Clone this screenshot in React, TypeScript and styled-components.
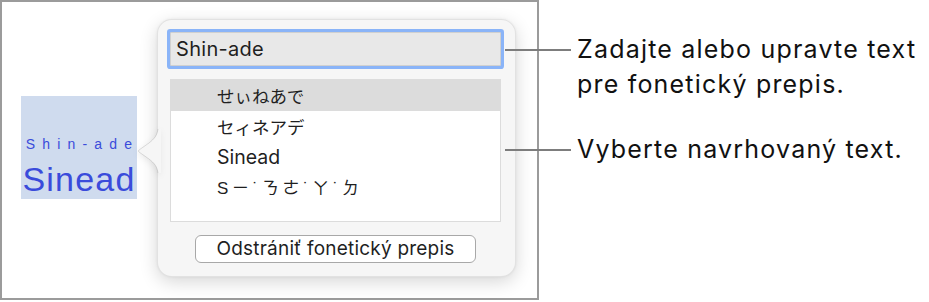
import * as React from 'react';
import styled, { createGlobalStyle } from 'styled-components';

const GlobalStyle = createGlobalStyle`
    html, body {
        margin: 0;
        padding: 0;
        background: #ffffff;
    }
    body {
        font-family: Inter, "Liberation Sans", Arial, "Noto Sans CJK JP", sans-serif;
        color: #1d1d1d;
    }
`;

type Script = 'kana' | 'latin' | 'zhuyin';

const suggestions: { text: string; script: Script }[] = [
    { text: 'せぃねあで', script: 'kana' },
    { text: 'セィネアデ', script: 'kana' },
    { text: 'Sinead', script: 'latin' },
    { text: 'Sㄧ˙ㄋㄜ˙ㄚ˙ㄉ', script: 'zhuyin' },
];

const callouts = [
    { id: 'edit', text: 'Zadajte alebo upravte text pre fonetický prepis.', gap: 0 },
    { id: 'pick', text: 'Vyberte navrhovaný text.', gap: 30 },
];

const rowFont = {
    kana: `font-family: "Noto Sans CJK JP", sans-serif; font-size: 17.5px;`,
    latin: `font-family: Inter, "Liberation Sans", sans-serif; font-size: 19.5px;`,
    zhuyin: `font-family: "Liberation Sans", "Noto Sans CJK TC", sans-serif; font-size: 17px; letter-spacing: 3.6px;`,
};

const PopoverArrow = () => (
    <ArrowSvg width="24" height="44" viewBox="0 0 24 44">
        <path
            d="M21 0 C20 7 17 10 12 14 L2 21 Q0.5 22 2 23 L12 30 C17 34 20 37 21 44 L24 44 L24 0 Z"
            fill="#f6f6f6"
        />
        <path
            d="M21 0 C20 7 17 10 12 14 L2 21 Q0.5 22 2 23 L12 30 C17 34 20 37 21 44"
            fill="none"
            stroke="rgba(0,0,0,0.12)"
            strokeWidth="1"
        />
    </ArrowSvg>
);

export default function App() {
    return (
        <Page>
            <GlobalStyle />
            <Frame>
                <Word>
                    <Ruby>Shin-ade</Ruby>
                    <Base>Sinead</Base>
                </Word>
                <Popover>
                    <PopoverArrow />
                    <Field>Shin-ade</Field>
                    <List>
                        {suggestions.map((s, i) => (
                            <Row key={s.text} selected={i === 0} script={s.script}>{s.text}</Row>
                        ))}
                    </List>
                    <ButtonRow>
                        <RemoveButton type="button">Odstrániť fonetický prepis</RemoveButton>
                    </ButtonRow>
                </Popover>
            </Frame>
            <Callouts>
                {callouts.map(c => (
                    <Callout key={c.id} gap={c.gap}>{c.text}</Callout>
                ))}
            </Callouts>
        </Page>
    );
}

const Page = styled.div`
    display: flex;
    align-items: flex-start;
    width: 929px;
    height: 302px;
`;

const Frame = styled.div`
    box-sizing: border-box;
    width: 539px;
    height: 300px;
    border: 2px solid #9b9b9b;
    display: flex;
    align-items: flex-start;
    padding: 17px 0 0 19px;
    flex-shrink: 0;
`;

const Word = styled.div`
    box-sizing: border-box;
    width: 116px;
    height: 103px;
    margin-top: 77px;
    padding-top: 40px;
    background: #cfdbee;
    color: #3a4bdb;
    font-family: "Liberation Sans", Arial, sans-serif;
    display: flex;
    flex-direction: column;
    align-items: center;
    flex-shrink: 0;
`;

const Ruby = styled.div`
    font-size: 14px;
    line-height: 16px;
    letter-spacing: 7.2px;
    margin-right: -7px;
`;

const Base = styled.div`
    font-size: 34px;
    line-height: 36px;
    letter-spacing: 1.2px;
    margin-top: 9px;
`;

const Popover = styled.div`
    position: relative;
    box-sizing: border-box;
    width: 359px;
    height: 258px;
    margin-left: 20px;
    padding: 13px 14px 13px 12px;
    background: #f6f6f6;
    border: 1px solid rgba(0, 0, 0, 0.08);
    border-radius: 15px;
    box-shadow: 0 5px 18px rgba(0, 0, 0, 0.16), 0 0 3px rgba(0, 0, 0, 0.06);
    display: flex;
    flex-direction: column;
    gap: 13px;
    flex-shrink: 0;
`;

const ArrowSvg = styled.svg`
    position: absolute;
    left: -21px;
    top: 109px;
    filter: drop-shadow(-1px 2px 3px rgba(0, 0, 0, 0.08));
`;

const Field = styled.div`
    box-sizing: border-box;
    height: 34px;
    margin-top: -1px;
    padding-left: 5px;
    background: #e8e8e8;
    border: 1px solid #d0d0d0;
    box-shadow: 0 0 0 3px #8ab4f8;
    border-radius: 1px;
    font-size: 20px;
    letter-spacing: 0.3px;
    line-height: 32px;
    color: #1f1f1f;
`;

const List = styled.div`
    box-sizing: border-box;
    height: 144px;
    background: #ffffff;
    border: 1px solid #dcdcdc;
    display: flex;
    flex-direction: column;
`;

const Row = styled.div<{ selected: boolean; script: Script }>`
    height: 31px;
    line-height: 31px;
    padding-left: 46px;
    color: #1f1f1f;
    white-space: nowrap;
    background: ${props => props.selected ? '#dcdcdc' : 'transparent'};
    ${props => rowFont[props.script]}
`;

const ButtonRow = styled.div`
    display: flex;
    justify-content: center;
`;

const RemoveButton = styled.button`
    box-sizing: border-box;
    width: 281px;
    height: 28px;
    padding: 0;
    background: #ffffff;
    border: 1px solid #a8a8a8;
    border-radius: 6px;
    font-family: Inter, "Liberation Sans", Arial, sans-serif;
    font-size: 19px;
    letter-spacing: 0.2px;
    color: #1f1f1f;
    line-height: 26px;
`;

const Callouts = styled.div`
    display: flex;
    flex-direction: column;
    padding-top: 32px;
    margin-left: 38px;
    width: 352px;
`;

const Callout = styled.div<{ gap: number }>`
    position: relative;
    margin-top: ${props => props.gap}px;
    font-size: 25px;
    letter-spacing: 1.2px;
    line-height: 35px;
    color: #111111;

    &::before {
        content: '';
        position: absolute;
        top: 17px;
        left: -72px;
        width: 66px;
        height: 2px;
        background: #7d7d7d;
    }
`;
